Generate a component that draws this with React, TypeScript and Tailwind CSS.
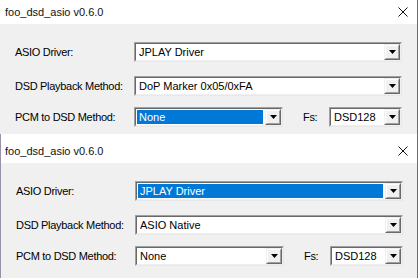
import React from "react";

function Arrow() {
  return (
    <svg width="7" height="4" viewBox="0 0 7 4" className="block">
      <path d="M0 0H7L3.5 4Z" fill="#000" />
    </svg>
  );
}

function Combo({
  text,
  className,
  selected,
}: {
  text: string;
  className: string;
  selected?: boolean;
}) {
  return (
    <div
      className={`h-[20px] border border-t-[#a0a0a0] border-l-[#a0a0a0] border-b-[#e8e8e8] border-r-[#e8e8e8] tracking-normal ${className}`}
    >
      <div className="flex h-full w-full border border-t-[#696969] border-l-[#696969] border-b-[#f0f0f0] border-r-[#f0f0f0] bg-white">
        <div className="flex min-w-0 flex-1 items-stretch p-[1px] pr-[2px]">
          <div
            className={`flex flex-1 items-center pl-[2px] whitespace-nowrap ${
              selected ? "bg-[#0078d7] text-white" : "text-black"
            }`}
          >
            {text}
          </div>
        </div>
        <div className="h-full w-[16px] border border-t-[#f0f0f0] border-l-[#f0f0f0] border-b-[#696969] border-r-[#696969] bg-[#f0f0f0]">
          <div className="flex h-full w-full items-center justify-center border border-t-white border-l-white border-b-[#a0a0a0] border-r-[#a0a0a0] bg-[#f0f0f0]">
            <Arrow />
          </div>
        </div>
      </div>
    </div>
  );
}

function CloseX() {
  return (
    <svg width="10" height="10" viewBox="0 0 10 10" className="block">
      <path d="M0.5 0.5L9.5 9.5M9.5 0.5L0.5 9.5" stroke="#111" strokeWidth="1" />
    </svg>
  );
}

function Dialog({
  variant,
}: {
  variant: "top" | "bottom";
}) {
  const top = variant === "top";
  return (
    <div
      className={`w-[418px] border-r border-r-[#7a5ea8] ${
        top ? "" : "border-l border-l-[#9a90a8]"
      }`}
    >
      <div
        className={`flex items-center bg-white ${
          top ? "h-[24px] pl-[5px]" : "h-[29px] pt-[5px] pl-[4px]"
        }`}
      >
        <span className="flex-1 text-[11px] text-[#111]">foo_dsd_asio v0.6.0</span>
        <div className="mr-[9px] flex h-[10px] w-[10px] items-center justify-center">
          <CloseX />
        </div>
      </div>
      <div
        className={`bg-[#f0f0f0] pt-[18px] pl-[14px] text-[11px] tracking-[-0.3px] ${
          top ? "h-[110px]" : "h-[120px]"
        }`}
      >
        <div className="flex h-[20px] items-center">
          <span className="w-[120px] pl-[1px]">ASIO Driver:</span>
          <Combo
            text="JPLAY Driver"
            className="w-[268px]"
            selected={!top}
          />
        </div>
        <div className="mt-[14px] flex h-[20px] items-center">
          <span className="w-[120px] pl-[1px]">DSD Playback Method:</span>
          <Combo
            text={top ? "DoP Marker 0x05/0xFA" : "ASIO Native"}
            className="w-[268px]"
          />
        </div>
        <div className="mt-[11px] flex h-[20px] items-center">
          <span className="w-[120px] pl-[1px]">PCM to DSD Method:</span>
          <Combo text="None" className="w-[149px]" selected={top} />
          <span className="ml-[20px] w-[26px]">Fs:</span>
          <Combo text="DSD128" className="w-[73px]" />
        </div>
      </div>
    </div>
  );
}

export default function App() {
  return (
    <div
      className="h-[278px] w-[420px] overflow-hidden bg-white text-black"
      style={{ fontFamily: '"Liberation Sans", Arial, sans-serif' }}
    >
      <Dialog variant="top" />
      <Dialog variant="bottom" />
    </div>
  );
}
